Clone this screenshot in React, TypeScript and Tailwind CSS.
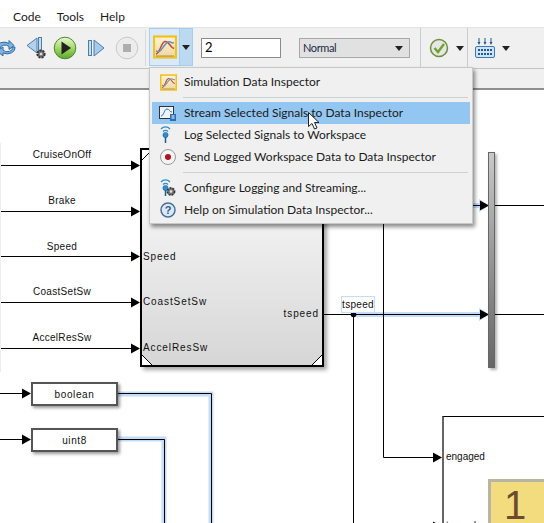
import React from "react";

const UI = { fontFamily: 'Lato,"Open Sans",sans-serif' };

function Caret({ className = "" }: { className?: string }) {
  return (
    <svg width="8" height="5" viewBox="0 0 8 5" className={className}>
      <path d="M0 0h8L4 5z" fill="#222" />
    </svg>
  );
}

function Chart({ s = 26, id }: { s?: number; id: string }) {
  return (
    <svg width={s} height={s} viewBox="0 0 24 24">
      <defs>
        <linearGradient id={id} x1="0" y1="0" x2="0" y2="1">
          <stop offset="0" stopColor="#fdf3dc" />
          <stop offset="1" stopColor="#f0d69c" />
        </linearGradient>
      </defs>
      <rect x="1" y="1.500" width="22" height="21" fill={`url(#${id})`} stroke="#f2c21a" strokeWidth="2.200" />
      <path d="M3 19C7 19 8 7 12 6.500s5 6 9 7" fill="none" stroke="#b5503a" strokeWidth="1.500" />
      <path d="M3 16C7 18 8 15 11 11s4-5 6-4 2 1 4 1" fill="none" stroke="#6f8fb0" strokeWidth="1.500" />
      <path d="M3 21h18" stroke="#8a7a5a" strokeWidth="0.800" />
    </svg>
  );
}

function Undo() {
  return (
    <svg width="16" height="18" viewBox="0 0 16 18">
      <path d="M-4 9a8 6 0 0 1 13-4.500V1.500l5 5-5 4V7.500a5 3.500 0 0 0-9 2z" fill="#7fb2e0" stroke="#2f6aa3" />
      <path d="M15 8a8 6 0 0 1-12 6V17l-6-5 6-4v3a5 3.500 0 0 0 9-3z" fill="#7fb2e0" stroke="#2f6aa3" />
    </svg>
  );
}

function StepBack() {
  return (
    <svg width="22" height="24" viewBox="0 0 22 24">
      <path d="M11 2v15L1 9.500z" fill="#b4d0ec" stroke="#4f7ea8" />
      <rect x="12.500" y="1.500" width="3" height="13" fill="#c7dcf1" stroke="#4f7ea8" />
      <circle cx="15" cy="18" r="3.600" fill="#777" stroke="#333" strokeWidth="2" strokeDasharray="2 1" />
      <circle cx="15" cy="18" r="1.300" fill="#ddd" />
    </svg>
  );
}

function Play() {
  return (
    <svg width="24" height="24" viewBox="0 0 24 24">
      <defs>
        <linearGradient id="pg" x1="0" y1="0" x2="0" y2="1">
          <stop offset="0" stopColor="#eef7d8" />
          <stop offset="0.500" stopColor="#a6d86a" />
          <stop offset="1" stopColor="#58a82c" />
        </linearGradient>
      </defs>
      <circle cx="12" cy="12" r="10.800" fill="url(#pg)" stroke="#4c8a2a" />
      <path d="M8.500 5.500v13l9.500-6.500z" fill="#222" />
    </svg>
  );
}

function StepFwd() {
  return (
    <svg width="18" height="18" viewBox="0 0 18 18">
      <rect x="1.500" y="1.500" width="3" height="15" fill="#c7dcf1" stroke="#4f7ea8" />
      <path d="M7 1v16l10-8z" fill="#a9c9e8" stroke="#4f7ea8" />
    </svg>
  );
}

function Stop() {
  return (
    <svg width="24" height="24" viewBox="0 0 24 24">
      <circle cx="12" cy="12" r="10.800" fill="#ececec" stroke="#c9c9c9" />
      <rect x="8" y="8" width="8" height="8" fill="#aeaeae" />
    </svg>
  );
}

function Check() {
  return (
    <svg width="20" height="20" viewBox="0 0 20 20">
      <circle cx="10" cy="10" r="8.500" fill="#e6e6e6" stroke="#6f8f3a" strokeWidth="1.500" />
      <path d="M5.500 10l3.500 4 6-8" fill="none" stroke="#6fa32c" strokeWidth="2.400" />
    </svg>
  );
}

function Keypad() {
  const dots = [];
  for (let y = 0; y < 2; y++) for (let x = 0; x < 5; x++) dots.push(<rect key={x + "-" + y} x={3 + x * 3} y={11 + y * 4} width="2" height="2" fill="#1f5a96" />);
  return (
    <svg width="20" height="20" viewBox="0 0 20 20">
      <rect x="0.500" y="8.500" width="19" height="11" rx="1.500" fill="#cfe3f6" stroke="#3b78b4" />
      {dots}
      <path d="M4 0v5M10 0v5M16 0v5" stroke="#1f5a96" />
      <path d="M2.500 4h3L4 7zM8.500 4h3L10 7zM14.500 4h3L16 7z" fill="#1f5a96" />
    </svg>
  );
}

function Stream() {
  return (
    <svg width="18" height="17" viewBox="0 0 18 17">
      <rect x="0.500" y="1.500" width="14" height="12" fill="#eef4fb" stroke="#333" />
      <path d="M2 11c3 0 3-7 6-7s2 3 5 3" fill="none" stroke="#2a6fb0" />
      <rect x="11" y="9" width="6" height="7" fill="#2a6fb0" />
      <path d="M12.500 11h3M12.500 13h3" stroke="#fff" />
    </svg>
  );
}

function Wifi({ gear = false }: { gear?: boolean }) {
  return (
    <svg width="18" height="20" viewBox="0 0 18 20">
      <path d="M2 4a6 6 0 0 1 9 0M4 6.500a3.500 3.500 0 0 1 5 0" fill="none" stroke="#2f8fd0" strokeWidth="1.300" />
      <circle cx="6.500" cy="10" r="2.600" fill="#2f8fd0" stroke="#1a5f96" strokeWidth="0.600" />
      <path d="M6.500 12v6" stroke="#1a5f96" strokeWidth="1.500" />
      {gear && (
        <g>
          <circle cx="12" cy="13.500" r="3.600" fill="#777" stroke="#333" strokeWidth="1.600" strokeDasharray="2 1" />
          <circle cx="12" cy="13.500" r="1.300" fill="#e5e5e5" />
        </g>
      )}
    </svg>
  );
}

function Rec() {
  return (
    <svg width="18" height="18" viewBox="0 0 18 18">
      <circle cx="9" cy="9" r="7.500" fill="#f4f4f4" stroke="#9a9a9a" />
      <circle cx="9" cy="9" r="3" fill="#b01020" />
    </svg>
  );
}

function Help() {
  return (
    <svg width="16" height="16" viewBox="0 0 16 16">
      <circle cx="8" cy="8" r="7" fill="#dfe8f2" stroke="#45709c" strokeWidth="1.500" />
      <text x="8" y="12" textAnchor="middle" fontSize="11" fontWeight="700" fill="#2e5d8c" fontFamily="Liberation Sans, sans-serif">?</text>
    </svg>
  );
}

function Row({ icon, label, active = false }: { icon: React.ReactNode; label: string; active?: boolean }) {
  return (
    <div className={"flex h-[22px] items-center " + (active ? "bg-[#93c6f0]" : "")}>
      <div className="flex w-[32px] items-center justify-center">{icon}</div>
      <span className="text-[12px] text-[#1a1a1a]">{label}</span>
    </div>
  );
}

function Menu() {
  return (
    <div
      className="absolute left-[149px] top-[67px] flex h-[157px] w-[324px] flex-col border border-[#c8c8c8] bg-[#f0f0f0] px-[2px] pt-[3px] shadow-[2px_3px_4px_rgba(0,0,0,0.45)]"
      style={UI}
    >
      <Row icon={<Chart s={17} id="chartMenu" />} label="Simulation Data Inspector" />
      <div className="ml-[31px] mr-[2px] my-[4px] h-px bg-[#d0d0d0]" />
      <Row active icon={<Stream />} label="Stream Selected Signals to Data Inspector" />
      <Row icon={<Wifi />} label="Log Selected Signals to Workspace" />
      <Row icon={<Rec />} label="Send Logged Workspace Data to Data Inspector" />
      <div className="ml-[31px] mr-[2px] my-[4px] h-px bg-[#d0d0d0]" />
      <Row icon={<Wifi gear />} label="Configure Logging and Streaming..." />
      <Row icon={<Help />} label="Help on Simulation Data Inspector..." />
    </div>
  );
}

function Toolbar() {
  return (
    <div className="relative flex h-[42px] items-center border-y border-[#e4e4e4] border-b-[#c4c4c4] bg-[#f0f0f0]" style={UI}>
      <div className="flex w-[145px] items-center">
        <div className="flex w-[16px]"><Undo /></div>
        <div className="ml-[10px]"><StepBack /></div>
        <div className="ml-[5px]"><Play /></div>
        <div className="ml-[10px]"><StepFwd /></div>
        <div className="ml-[10px]"><Stop /></div>
      </div>
      <div className="h-[36px] w-px bg-[#d8d8d8]" />
      <div className="ml-[3px] flex h-[38px] w-[44px] self-start border border-[#a6cdf0] bg-[#bcd9f2]">
        <div className="flex w-[30px] items-center justify-center border-r border-[#a6cdf0] bg-[#d9e9f8]"><Chart s={24} id="chartBar" /></div>
        <div className="flex flex-1 items-center justify-center"><Caret /></div>
      </div>
      <div className="ml-[8px] flex h-[20px] w-[80px] items-center border border-[#8c8c8c] bg-white pl-[3px] text-[13px] text-black">2</div>
      <div className="ml-[18px] flex h-[20px] w-[111px] items-center justify-between border border-[#a8a8a8] bg-[#e1e1e1] px-[3px] pr-[6px] text-[11px] tracking-[-0.4px] text-[#1a2a44]">
        Normal
        <Caret />
      </div>
      <div className="ml-[10px] h-[40px] w-px bg-[#cccccc]" />
      <div className="ml-[8px]"><Check /></div>
      <Caret className="ml-[7px]" />
      <div className="ml-[3px] h-[40px] w-px bg-[#cccccc]" />
      <div className="ml-[7px]"><Keypad /></div>
      <Caret className="ml-[7px]" />
    </div>
  );
}

const WIRES_Y = [165, 211, 256, 302, 348];

function Arrow({ x, y }: { x: number; y: number }) {
  return <path d={`M${x - 9} ${y - 4.5}L${x} ${y + 0.5}L${x - 9} ${y + 5.5}z`} fill="#000" />;
}

function Label({ x, y, w, align = "center", wide = false, children }: { x: number; y: number; w: number; align?: string; wide?: boolean; children: React.ReactNode }) {
  const cls = align === "center" ? "text-center" : align === "right" ? "text-right" : "text-left";
  return (
    <div
      className={"absolute whitespace-nowrap text-[10px] leading-[12px] text-[#111] " + (wide ? "tracking-[0.9px] " : "tracking-[0.3px] ") + cls}
      style={{ left: x, top: y - 90 - 6, width: w }}
    >
      {children}
    </div>
  );
}

function Diagram() {
  const hi = "#c4dcf8";
  return (
    <div className="relative flex-1 overflow-hidden bg-white" style={{ fontFamily: '"Liberation Sans",sans-serif' }}>
      <svg width="544" height="433" viewBox="0 90 544 433" className="absolute left-0 top-0">
        {WIRES_Y.map((y) => (
          <g key={y}>
            <path d={`M0 ${y + 0.5}H132`} stroke="#000" />
            <Arrow x={140} y={y} />
          </g>
        ))}
        <path d="M0.500 143V372" stroke="#eeeeee" />
        <path d="M118 394H211V523M118 439H164V523" fill="none" stroke={hi} strokeWidth="5" />
        <path d="M118 393.500H211.500V523M118 439.500H164.500V523" fill="none" stroke="#000" />
        <path d="M0 393.500H24M0 439.500H24" stroke="#000" />
        <Arrow x={31} y={393} />
        <Arrow x={31} y={439} />
        <path d="M353 314.500H486M473 205.500H486" stroke={hi} strokeWidth="5" />
        <path d="M479 308l10 6.500-10 6.500zM479 199l10 6.500-10 6.500z" fill={hi} />
        <path d="M323 314.500H484M473 205.500H484M495 314.500H544M495 205.500H544" stroke="#000" />
        <Arrow x={489} y={314} />
        <Arrow x={489} y={205} />
        <path d="M353.500 314V523M383.500 223V457.500H434" fill="none" stroke="#000" />
        <circle cx="353.500" cy="314.500" r="2.800" fill="#000" />
        <Arrow x={442} y={457} />
        <Arrow x={442} y={526} />
      </svg>

      <div className="absolute left-[140px] top-[58px] h-[219px] w-[184px] border-2 border-black bg-gradient-to-b from-white to-[#d6d6d6] shadow-[3px_3px_4px_rgba(0,0,0,0.35)]">
        <svg width="180" height="215" viewBox="0 0 180 215" className="absolute left-0 top-0">
          <path d="M0 205L10 215H0zM170 215L180 205V215zM0 10L10 0H0z" fill="#fff" />
          <path d="M0 10L10 0M0 205L10 215M170 215L180 205" stroke="#000" />
        </svg>
      </div>
      <Label x={0} y={155} w={124}>CruiseOnOff</Label>
      <Label x={0} y={201} w={124}>Brake</Label>
      <Label x={0} y={247} w={124}>Speed</Label>
      <Label x={0} y={292} w={124}>CoastSetSw</Label>
      <Label x={0} y={338} w={124}>AccelResSw</Label>
      <Label x={143} y={257} w={80} align="left" wide>Speed</Label>
      <Label x={143} y={302} w={80} align="left" wide>CoastSetSw</Label>
      <Label x={143} y={348} w={80} align="left" wide>AccelResSw</Label>
      <Label x={239} y={314} w={80} align="right" wide>tspeed</Label>

      <div className="absolute left-[341px] top-[206px] flex h-[17px] w-[34px] items-center justify-center border border-[#c4dcf8] bg-white text-[10px] tracking-[0.3px] text-[#111]">
        tspeed
      </div>

      <div className="absolute left-[488px] top-[62px] h-[216px] w-[7px] border border-[#666] bg-gradient-to-b from-[#c8c8c8] to-[#666666] shadow-[2px_2px_3px_rgba(0,0,0,0.3)]" />

      {[
        ["boolean", 292],
        ["uint8", 338],
      ].map(([t, top]) => (
        <div
          key={t as string}
          className="absolute left-[31px] flex h-[24px] w-[87px] items-center justify-center border-2 border-[#555] bg-white text-[10px] tracking-[0.6px] text-[#111] shadow-[2px_2px_3px_rgba(0,0,0,0.4)]"
          style={{ top: top as number }}
        >
          {t}
        </div>
      ))}

      <div className="absolute left-[442px] top-[326px] h-[120px] w-[110px] border-l-2 border-t border-l-[#666] border-t-black bg-white">
        <div className="absolute left-[2px] top-[34px] text-[10px] leading-[12px] text-[#111]">engaged</div>
        <div className="absolute left-[2px] top-[103px] text-[10px] leading-[12px] text-[#111]">tspeed</div>
        <div className="absolute left-[44px] top-[62px] flex h-[60px] w-[70px] items-start border-[3px] border-[#b9b5a3] bg-[#f3dc7d] pl-[13px] text-[40px] leading-[46px] text-[#6b4a2d]">
          1
        </div>
      </div>
    </div>
  );
}

function Cursor() {
  return (
    <svg width="14" height="20" viewBox="0 0 14 20" className="absolute left-[307px] top-[111px]">
      <path d="M1.500 1.500V15.500L5 12.500L7.500 18L10 17L7.500 11.500H12z" fill="#fff" stroke="#222" />
    </svg>
  );
}

export default function App() {
  return (
    <div className="relative flex h-[523px] w-[544px] flex-col overflow-hidden bg-white">
      <div className="flex h-[27px] items-end bg-white pb-[1px] text-[12px] text-[#1a1a1a]" style={UI}>
        <span className="ml-[13px]">Code</span>
        <span className="ml-[16px]">Tools</span>
        <span className="ml-[16px]">Help</span>
      </div>
      <Toolbar />
      <div className="h-[21px] border-b-2 border-[#8e8e8e] bg-[#f0f0f0]" />
      <Diagram />
      <Menu />
      <Cursor />
    </div>
  );
}
